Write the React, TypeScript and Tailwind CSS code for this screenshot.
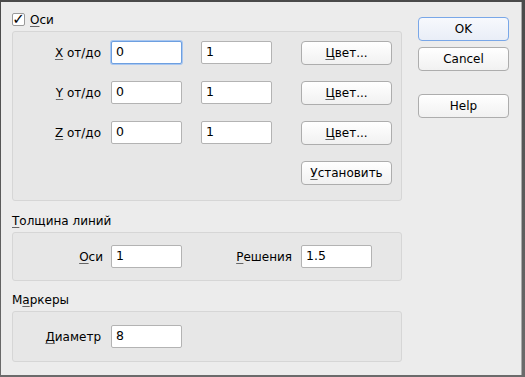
import React from "react";

const font = { fontFamily: '"DejaVu Sans", "Liberation Sans", sans-serif' };

function U({ children }: { children: React.ReactNode }) {
  return <span className="underline decoration-[#666] underline-offset-[2px]">{children}</span>;
}

function Input({ value, focus = false }: { value: string; focus?: boolean }) {
  return (
    <div
      className={
        "w-[71px] h-[23px] bg-white rounded-[2px] flex items-center pl-[4px] text-[12.5px] text-black " +
        (focus
          ? "border border-[#6d9fe0] shadow-[0_0_0_1px_#a9c7f0]"
          : "border border-[#b3b3b3]")
      }
    >
      {value}
    </div>
  );
}

function Btn({ children, def = false }: { children: React.ReactNode; def?: boolean }) {
  return (
    <div
      className={
        "w-[91px] h-[24px] rounded-[4px] flex items-center justify-center text-[12px] text-black " +
        (def
          ? "border border-[#79a7e8] bg-gradient-to-b from-[#f7f9fd] to-[#e9eef7]"
          : "border border-[#adadad] bg-gradient-to-b from-[#ffffff] to-[#f1f1f1]")
      }
    >
      {children}
    </div>
  );
}

function AxisRow({ letter }: { letter: string }) {
  return (
    <div className="flex items-center h-[23px]">
      <div className="w-[88px] text-right text-[12px] text-black">
        <U>{letter}</U> от/до
      </div>
      <div className="ml-[10px]">
        <Input value="0" focus={letter === "X"} />
      </div>
      <div className="ml-[19px]">
        <Input value="1" />
      </div>
      <div className="ml-[29px]">
        <Btn>
          <span>
            <U>Ц</U>вет...
          </span>
        </Btn>
      </div>
    </div>
  );
}

export default function App() {
  return (
    <div className="w-[525px] h-[377px] bg-gradient-to-b from-[#4a4a4a] to-[#6b6b6b] relative overflow-hidden" style={font}>
      <div className="absolute left-[1px] top-[2px] w-[521px] h-[373px] bg-[#ececec] flex border-r border-[#a9a9a9]">
        {/* left column */}
        <div className="ml-[11px] w-[390px] flex flex-col">
          <div className="mt-[10px] h-[15px] flex items-center">
            <div className="w-[13px] h-[13px] bg-white border border-[#9a9a9a] rounded-[2px] flex items-center justify-center text-[15px] leading-none text-black font-bold">
              ✓
            </div>
            <span className="ml-[5px] text-[12px] text-black">
              <U>О</U>си
            </span>
          </div>
          <div className="mt-[4px] h-[170px] rounded-[3px] border border-[#d6d6d6] bg-[#e7e7e7] pt-[9px] flex flex-col gap-[17px]">
            <AxisRow letter="X" />
            <AxisRow letter="Y" />
            <AxisRow letter="Z" />
            <div className="flex h-[23px]">
              <div className="ml-[288px]">
                <Btn>
                  <span>
                    <U>У</U>становить
                  </span>
                </Btn>
              </div>
            </div>
          </div>
          <div className="mt-[11px] h-[18px] flex items-center text-[12px] text-black">
            <span>
              <U>Т</U>олщина линий
            </span>
          </div>
          <div className="mt-[2px] h-[49px] rounded-[3px] border border-[#d6d6d6] bg-[#e7e7e7] flex items-center">
            <div className="w-[90px] text-right text-[12px] text-black">
              <U>О</U>си
            </div>
            <div className="ml-[8px]">
              <Input value="1" />
            </div>
            <div className="w-[110px] text-right text-[12px] text-black">
              <U>Р</U>ешения
            </div>
            <div className="ml-[9px]">
              <Input value="1.5" />
            </div>
          </div>
          <div className="mt-[10px] h-[18px] flex items-center text-[12px] text-black">
            <span>
              М<U>а</U>ркеры
            </span>
          </div>
          <div className="mt-[2px] h-[51px] rounded-[3px] border border-[#d6d6d6] bg-[#e7e7e7] flex items-center">
            <div className="w-[88px] text-right text-[12px] text-black">
              <U>Д</U>иаметр
            </div>
            <div className="ml-[10px]">
              <Input value="8" />
            </div>
          </div>
        </div>
        {/* right column */}
        <div className="ml-[16px] flex flex-col">
          <div className="mt-[15px]">
            <Btn def>OK</Btn>
          </div>
          <div className="mt-[6px]">
            <Btn>Cancel</Btn>
          </div>
          <div className="mt-[23px]">
            <Btn>Help</Btn>
          </div>
        </div>
      </div>
    </div>
  );
}
